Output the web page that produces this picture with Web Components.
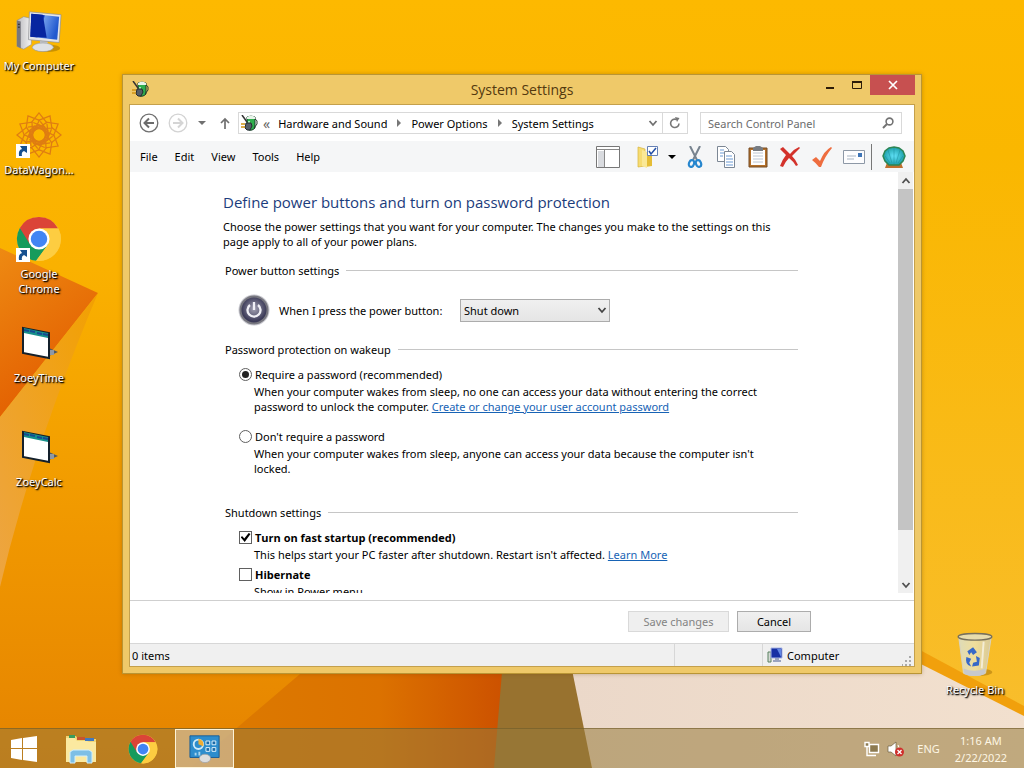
<!DOCTYPE html>
<html lang="en">
<head>
<meta charset="utf-8">
<meta name="viewport" content="width=device-width, initial-scale=1">
<title>System Settings</title>
<style>
    html, body {
        margin: 0;
        height: 100%;
    }
    body {
        font: 11px/15px "Noto Sans", "Open Sans", sans-serif;
        color: #000;
        --title-font: "Open Sans", "Noto Sans", sans-serif;
        --accent: #efc969;
        --line: #cfcfcf;
        --link: #1763b5;
    }
</style>
</head>
<body>
<desk-top>
    <desktop-icon slot="icons" icon="computer" label="My Computer"></desktop-icon>
    <desktop-icon slot="icons" icon="wagon" label="DataWagon..." shortcut></desktop-icon>
    <desktop-icon slot="icons" icon="chrome" label="Google Chrome" shortcut></desktop-icon>
    <desktop-icon slot="icons" icon="zoey" label="ZoeyTime"></desktop-icon>
    <desktop-icon slot="icons" icon="zoey" label="ZoeyCalc"></desktop-icon>
    <desktop-icon slot="corner" icon="bin" label="Recycle Bin"></desktop-icon>

    <app-window slot="window" caption="System Settings">
        <nav-bar></nav-bar>
        <menu-strip></menu-strip>
        <power-settings></power-settings>
        <status-bar></status-bar>
    </app-window>

    <task-bar slot="taskbar"></task-bar>
</desk-top>

<script>
const ICONS = {
    computer: ['0 0 48 46', `
        <defs>
            <linearGradient id="a" x1="0" x2="1" y2=".3"><stop offset="0" stop-color="#0a2a9c"/><stop offset=".45" stop-color="#0a33c0"/><stop offset=".5" stop-color="#6f9bea"/><stop offset="1" stop-color="#2259cf"/></linearGradient>
            <linearGradient id="b" x1="0" x2="1"><stop offset="0" stop-color="#b9b9bd"/><stop offset="1" stop-color="#f4f4f4"/></linearGradient>
        </defs>
        <ellipse cx="32" cy="41" rx="14" ry="4" fill="#6b4a00" opacity=".35"/>
        <path d="M1 12l7-4 8 2v27l-8 5-7-3z" fill="url(#b)" stroke="#8d8d92" stroke-width=".6"/>
        <path d="M1 12l4 1v28l-4-2z" fill="#77777d"/><path d="M2 16h2M2 19h2" stroke="#222"/>
        <path d="M25 33l8 1v5h-8z" fill="#c3c5c9"/>
        <ellipse cx="28" cy="40" rx="11" ry="4.500" fill="#dfe1e4" stroke="#97999d" stroke-width=".6"/>
        <path d="M14 3l33 3-2 29-32-3z" fill="#e4e5e8" stroke="#8b8d92" stroke-width=".7"/>
        <path d="M16 5l29 3-2 24-28-3z" fill="url(#a)"/>
        <path d="M16 5l12 1 4 24-17-1z" fill="#0725a0"/>`],
    wagon: ['-24 -24 48 48', `
        <g fill="none" stroke="#df7d12" stroke-width="1.300">
            ${[...Array(12).keys()].map(i => `<path transform="rotate(${i * 30})" d="M-8-13L0-23l8 10-13 8M-5-9L5-5M-6-13l12 5M-4-7q4-7 8 0"/>`).join('')}
            <circle r="7" stroke-dasharray="3 1.500"/>
        </g>`],
    chrome: ['0 0 48 48', `
        <circle cx="24" cy="24" r="23" fill="#fbc940"/>
        <path d="M24 24L4 12.500A23 23 0 0 0 21 46.800L34 29z" fill="#169b5c"/>
        <path d="M4 12.500A23 23 0 0 1 44 13H24L14.500 29.500z" fill="#db4437"/>
        <path d="M24 13h20a23 23 0 0 1-23 33.800L34 29z" fill="#fdcd41"/>
        <circle cx="24" cy="24" r="11" fill="#fff"/>
        <circle cx="24" cy="24" r="8.600" fill="#4285f4"/>`],
    zoey: ['0 0 38 34', `
        <path d="M29 22l9 4-9 4z" fill="#4d5865"/><path d="M29 24h5v5h-5z" fill="#8f98a3"/>
        <path d="M3 2l26 5v25L3 27z" fill="#fff" stroke="#14202b" stroke-width="2"/>
        <path d="M4 2l24 5v5L4 7z" fill="#17908a"/>
        <path d="M4 4l5 1M10 5l5 1M17 7l5 1M23 8l5 1" stroke="#154a92" stroke-width="2"/>`],
    bin: ['0 0 40 48', `
        <defs><linearGradient id="g" x1="0" x2="1"><stop offset="0" stop-color="#dedbb8"/><stop offset=".5" stop-color="#f0dd9a"/><stop offset="1" stop-color="#d8c997"/></linearGradient></defs>
        <ellipse cx="23" cy="42" rx="15" ry="4" fill="#8c5c00" opacity=".4"/>
        <path d="M3 5l5 38q12 5 23 0L37 5z" fill="url(#g)" stroke="#d7d3c3"/>
        <path d="M8 38l1 6q11 4 21 0l1-6q-12 5-23 0z" fill="#c7c9cc"/>
        <ellipse cx="20" cy="5" rx="17.500" ry="3.500" fill="#e7dcae" stroke="#77705c" stroke-width="1.500"/>
        <path d="M12 20l6-4 4 5-4 3-2-3-2 3zM21 25l4 2-1 8-7 1 1-4 4-1zM11 26l5 2-2 4 2 4q-7-2-5-10z" fill="#3768c7"/>
        <path d="M29 10l-2 28" stroke="#fff" opacity=".6" stroke-width="2"/>`],
    shortcut: ['0 0 14 14', `
        <path d="M0 0h14v14H0z" fill="#fff"/>
        <path d="M3 12q-1-6 3-7L4 2h7v7L8 7q-3 1-2 5z" fill="#17508f"/>`],
    plug: ['0 0 17 17', `
        <path d="M6 2l4-1 4 1v11q-4 4-8 1z" fill="#2fae4d" stroke="#173d28"/>
        <path d="M6 2q4-3 8 0v2H6z" fill="#e9f4ea"/><path d="M8 6v6" stroke="#a7efb5" stroke-width="2"/>
        <path d="M14 4q3 1 2 5l-3 4" fill="none" stroke="#243b2b"/>
        <path d="M1 0l5 7" stroke="#333" stroke-width="1.500"/>
        <path d="M5 8h5l1 3-2 4H6l-2-2z" fill="#555e68" stroke="#252a30"/>
        <path d="M0 9h4M0 12h4" stroke="#d29413" stroke-width="1.500"/>`],
    back: ['0 0 20 20', `<circle cx="10" cy="10" r="8.800" fill="#fff" stroke="#707070" stroke-width="1.300"/><path d="M15 10H6M10 5.500L5.500 10l4.500 4.500" fill="none" stroke="#6b6b6b" stroke-width="2"/>`],
    forward: ['0 0 20 20', `<circle cx="10" cy="10" r="8.800" fill="#fff" stroke="#d3d3d3" stroke-width="1.300"/><path d="M5 10h9M10 5.500l4.500 4.500-4.500 4.500" fill="none" stroke="#d5d5d5" stroke-width="2"/>`],
    caret: ['0 0 8 8', `<path d="M0 2h8L4 6z" fill="currentColor"/>`],
    up: ['0 0 10 12', `<path d="M5 12V2M1 6l4-4 4 4" fill="none" stroke="#707070" stroke-width="1.700"/>`],
    crumb: ['0 0 6 8', `<path d="M1 0l4 4-4 4z" fill="#777"/>`],
    chevron: ['0 0 10 10', `<path d="M1.500 3L5 7l3.500-4" fill="none" stroke="currentColor" stroke-width="1.800"/>`],
    refresh: ['0 0 12 12', `<path d="M10 6.500A4.200 4.200 0 1 1 7.500 2.500" fill="none" stroke="#777" stroke-width="1.600"/><path d="M6 0l4.500 1L8 5z" fill="#777"/>`],
    search: ['0 0 12 12', `<circle cx="7.500" cy="4.500" r="3.400" fill="none" stroke="#737373" stroke-width="1.600"/><path d="M5 7l-4 4" stroke="#737373" stroke-width="2"/>`],
    pane: ['0 0 24 22', `<path d="M.5.5h23v21H.5z" fill="#fff" stroke="#777"/><path d="M1 3.500h22M8.500 4v17" stroke="#888"/><path d="M2 5h6v16H2z" fill="#d9dbdf"/>`],
    folder: ['0 0 22 22', `<path d="M2 1l7 2v17l-7 1z" fill="#f6dc73" stroke="#d9b53b" stroke-width=".7"/><path d="M9 7h7v13l-7 1z" fill="#e5bd36"/><path d="M6 4l5 2v16l-5-2z" fill="#fae896"/><path d="M11.500.5h10v9h-10z" fill="#fff" stroke="#6681b5"/><path d="M13 5l2 3 5-6" fill="none" stroke="#234fa6" stroke-width="1.500"/>`],
    cut: ['0 0 16 22', `<path d="M3 0l7 14M13 0L6 14" stroke="#77838f" stroke-width="2"/><g fill="none" stroke="#2686ce" stroke-width="2.200"><ellipse cx="4.500" cy="17.500" rx="2.500" ry="3.500" transform="rotate(20 4.500 17.500)"/><ellipse cx="11.500" cy="17.500" rx="2.500" ry="3.500" transform="rotate(-20 11.500 17.500)"/></g>`],
    copy: ['0 0 20 22', `<g fill="#fff" stroke="#7c8794"><path d="M1.500.5h8l3 3v12h-11z"/><path d="M8.500 5.500h7l3 3v13h-10z"/></g><path d="M4 4h4M4 7h4M4 10h3M10 10h6M10 13h7M10 16h7M10 19h7" stroke="#6a9ad4"/>`],
    paste: ['0 0 20 22', `<path d="M1 2h18v19H1z" fill="#b3702a" stroke="#754a22"/><path d="M3 4h14v15H3z" fill="#fff"/><path d="M5 2l3-2h4l3 2v3H5z" fill="#777c82"/><path d="M5 7h10M5 10h10M5 13h10M5 16h10" stroke="#bcc6d3"/>`],
    remove: ['0 0 22 22', `<path d="M1 3l3-2 7 7q4-5 9-7l1 1-8 8q4 4 6 9l-2 1q-3-5-7-8-4 4-6 9l-3-1q2-6 6-11z" fill="#d3322b"/>`],
    tick: ['0 0 20 22', `<path d="M0 14l4-3 4 4Q12 5 19 1l1 1Q13 10 9 21H7q-3-4-7-7z" fill="#ee6d3f"/>`],
    mail: ['0 0 22 14', `<path d="M.5.5h21v13H.5z" fill="#fdfdfe" stroke="#8d98a6"/><path d="M4 6h9M4 9h7" stroke="#a9b5c3"/><path d="M15 3h4v4h-4z" fill="#3e75b7"/>`],
    shell: ['0 0 24 22', `
        <defs><radialGradient id="s"><stop offset="0" stop-color="#62e3fa"/><stop offset="1" stop-color="#1d9fa8"/></radialGradient></defs>
        <path d="M6 14h12l3 8H3z" fill="#c06f2c"/>
        <path d="M12 1l5 1 4 3 2 5-2 5-4 4H7l-4-4-2-5 2-5 4-3z" fill="url(#s)" stroke="#2d8554" stroke-width="1.500"/>
        <path d="M12 18V2M10 17L6 4M14 17l4-13M8 17l-5-7M16 17l5-7" stroke="#1a8b9b" stroke-width=".5" fill="none"/>`],
    power: ['0 0 32 32', `
        <defs><radialGradient id="p" cx=".5" cy=".45"><stop offset="0" stop-color="#a3a2b3"/><stop offset="1" stop-color="#3b3a57"/></radialGradient></defs>
        <circle cx="16" cy="16" r="15.500" fill="#c8c8cf"/><circle cx="16" cy="16" r="14.500" fill="#77777f"/><circle cx="16" cy="16" r="12.500" fill="url(#p)"/>
        <path d="M12 11a6.500 6.500 0 1 0 8 0M16 8v8" fill="none" stroke="#f1f1f6" stroke-width="2.300"/>`],
    pc: ['0 0 16 16', `<path d="M1 5h3v10H1z" fill="#d5dad5" stroke="#5b8161"/><path d="M4 1h11v10H4z" fill="#1730a4" stroke="#a9b6e6"/><path d="M10 2h4v8z" fill="#6287e4"/><path d="M8 11h4v2h2v2H6v-2h2z" fill="#9aa4bf"/>`],
    grip: ['0 0 10 10', `<path d="M7 0h2v2H7zM7 4h2v2H7zM7 8h2v2H7zM3 4h2v2H3zM3 8h2v2H3zM-1 8h2v2h-2z" fill="#aaa"/>`],
    minimize: ['0 0 12 12', `<path d="M2 8h8v2H2z" fill="#2c1c08"/>`],
    maximize: ['0 0 12 12', `<path d="M1.500 2.500h9v7h-9z" fill="none" stroke="#2c1c08"/><path d="M1 2h10v2H1z" fill="#2c1c08"/>`],
    close: ['0 0 12 12', `<path d="M2 2l8 8M10 2l-8 8" stroke="#fff" stroke-width="1.700"/>`],
    start: ['0 0 28 28', `<path d="M1 5l11-2v10H1zM13 3l14-2v12H13zM1 14h11v11L1 23zM13 14h14v13l-14-2z" fill="#fff"/>`],
    explorer: ['0 0 32 30', `
        <path d="M1 2h10l2 3h18v23H1z" fill="#f1d575"/><path d="M4 1h6v3H4z" fill="#3a9b5c"/><path d="M12 3h8v3h-8z" fill="#c9542b"/><path d="M20 4h9v3h-9z" fill="#4278bd"/>
        <path d="M1 4h9l2 3h10l2 1h7v20H1z" fill="#fbe9a0"/>
        <path d="M5 29V18l3-2h16l3 2v11h-5v-7H10v7z" fill="#7dbfe6" stroke="#d2effb"/>`],
    panel: ['0 0 34 30', `
        <path d="M1 1h31v23H1z" fill="#2d8dcd" stroke="#175c95"/>
        <circle cx="10" cy="10" r="5" fill="none" stroke="#cfeaf9" stroke-width="2"/><path d="M10 10V4a6 6 0 0 1 5 8z" fill="#f0ad34"/>
        <path d="M18 6.500h4v4h-4zM24.500 6.500h4v4h-4zM18 13.500h4v4h-4zM24.500 13.500h4v4h-4z" fill="#1c6aa7" stroke="#e1f4ff"/>
        <path d="M7 19v3M11 18v4" stroke="#a8d6ef" stroke-width="2"/>
        <ellipse cx="17" cy="25" rx="6" ry="4.500" fill="#dcdddd" stroke="#999" stroke-width=".7"/>`],
    network: ['0 0 16 16', `<path d="M5.500 3.500h9v8h-9z" fill="#8d7a50" stroke="#fff" stroke-width="1.400"/><path d="M1 1.500h4v4H1z" fill="#8d7a50" stroke="#fff" stroke-width="1.400"/><path d="M3 6v8.500h9" fill="none" stroke="#fff" stroke-width="1.400"/>`],
    volume: ['0 0 18 16', `<path d="M1 5h3l5-4v14l-5-4H1z" fill="#fff" stroke="#6e5e3f" stroke-width=".7"/><path d="M11 4q3 4 0 8" fill="none" stroke="#fff"/><circle cx="12.500" cy="11" r="4.500" fill="#cf2f2b"/><path d="M10.500 9l4 4M14.500 9l-4 4" stroke="#fff" stroke-width="1.300"/>`]
};

function define(name, html, setup) {
    customElements.define(name, class extends HTMLElement {
        constructor() {
            super();
            this.attachShadow({mode: 'open'});
        }
        connectedCallback() {
            this.shadowRoot.innerHTML = html;
            if (setup) setup(this, this.shadowRoot);
        }
    });
}

define('shell-icon', '', (el, root) => {
    const [box, shapes] = ICONS[el.getAttribute('name')];
    root.innerHTML = `
        <style>
            :host { display: block; flex: none; width: 16px; height: 16px; }
            svg { display: block; width: 100%; height: 100%; }
        </style>
        <svg viewBox="${box}" aria-hidden="true">${shapes}</svg>`;
});

define('desk-top', `
    <style>
        :host {
            position: relative;
            display: grid;
            grid-template-rows: 1fr auto;
            min-height: 100vh;
            overflow: hidden;
        }
        .wallpaper { position: absolute; width: 100%; height: 100%; }
        main {
            position: relative;
            display: flex;
            justify-content: space-between;
        }
        .corner { align-self: flex-end; padding-right: 10px; }
        ::slotted([slot=window]) { position: absolute; inset: 74px 102px 54px 122px; }
    </style>
    <svg class="wallpaper" viewBox="0 0 1024 768" preserveAspectRatio="none" aria-hidden="true">
        <defs>
            <linearGradient id="sky" x1="0" x2="0" y2="1"><stop offset="0" stop-color="#fdb900"/><stop offset=".35" stop-color="#fab100"/><stop offset=".7" stop-color="#f09700"/><stop offset="1" stop-color="#e58300"/></linearGradient>
            <linearGradient id="east" x1="0" x2="0" y2="1"><stop offset="0" stop-color="#fdb900"/><stop offset=".2" stop-color="#fab700"/><stop offset="1" stop-color="#f8be30"/></linearGradient>
            <linearGradient id="red" x1="0" x2=".4" y2="1"><stop offset="0" stop-color="#ee8a12"/><stop offset="1" stop-color="#e25c00"/></linearGradient>
            <linearGradient id="ray" x1="1" x2="0" y2="1"><stop offset="0" stop-color="#f2a000"/><stop offset="1" stop-color="#eda542"/></linearGradient>
            <linearGradient id="fold" x1="0" x2="1"><stop offset="0" stop-color="#dc7b00"/><stop offset=".6" stop-color="#dc7200"/><stop offset="1" stop-color="#cc5100"/></linearGradient>
            <linearGradient id="sand" x1="0" x2="1"><stop offset="0" stop-color="#ebd8c9"/><stop offset="1" stop-color="#f2e0ce"/></linearGradient>
        </defs>
        <path d="M0 0h1024v768H0z" fill="url(#sky)"/>
        <path d="M600 0h424v768H600z" fill="url(#east)"/>
        <path d="M0 248l98 45L0 417z" fill="url(#red)"/>
        <path d="M98 293L0 417v170Q32 450 98 293z" fill="url(#ray)"/>
        <path d="M300 674h205l-10 94H190z" fill="url(#fold)"/>
        <path d="M503 660h69l20 108h-98z" fill="#98722f"/>
        <path d="M570 660h352l102 52v56H592z" fill="url(#sand)"/>
        <path d="M905 642l119 64v10L905 656z" fill="#f1a00c"/>
    </svg>
    <main>
        <div><slot name="icons"></slot></div>
        <div class="corner"><slot name="corner"></slot></div>
        <slot name="window"></slot>
    </main>
    <slot name="taskbar"></slot>`);

define('desktop-icon', `
    <style>
        :host { display: block; width: 78px; height: 104px; }
        a {
            display: flex;
            flex-direction: column;
            align-items: center;
            gap: 4px;
            padding-top: 8px;
            color: #fff;
            text-align: center;
            text-decoration: none;
            text-shadow: 1px 1px 1px #000, 1px 1px 2px #000;
        }
        .art { display: grid; place-items: center; width: 46px; height: 46px; }
        .art > * { grid-area: 1 / 1; }
        .picture { width: 46px; height: 46px; }
        .picture[name=zoey] { width: 38px; height: 34px; }
        .badge { width: 14px; height: 14px; place-self: end start; }
        span { padding: 0 8px; }
        span.wide { padding: 0; white-space: nowrap; }
    </style>
    <a href="#">
        <div class="art"></div>
        <span></span>
    </a>`, (el, root) => {
        const label = el.getAttribute('label');
        const span = root.querySelector('span');
        span.textContent = label;
        span.classList.toggle('wide', label !== 'Google Chrome');
        root.querySelector('.art').innerHTML =
            `<shell-icon class="picture" name="${el.getAttribute('icon')}"></shell-icon>` +
            (el.hasAttribute('shortcut') ? '<shell-icon class="badge" name="shortcut"></shell-icon>' : '');
    });

define('app-window', `
    <style>
        :host {
            box-sizing: border-box;
            display: flex;
            flex-direction: column;
            padding: 0 6px 6px;
            border: 1px solid #b99535;
            background: var(--accent);
            box-shadow: 0 0 4px rgba(110, 70, 0, .35);
        }
        header {
            display: grid;
            grid-template-columns: 1fr auto 1fr;
            flex: none;
            height: 29px;
        }
        .app { align-self: center; width: 17px; height: 17px; margin-left: 3px; }
        h1 { align-self: center; margin: 0; font: 400 14px/20px var(--title-font); color: #53390f; }
        .controls { display: flex; justify-content: flex-end; }
        .controls button {
            display: grid;
            place-items: center;
            width: 27px;
            height: 20px;
            padding: 0;
            border: 0;
            background: none;
        }
        .controls .close { width: 45px; background: #c75050; }
        .controls shell-icon { width: 12px; height: 12px; }
        .body {
            display: flex;
            flex-direction: column;
            flex: 1;
            min-height: 0;
            border: 1px solid #c4a04c;
            background: #fff;
        }
    </style>
    <header>
        <shell-icon class="app" name="plug"></shell-icon>
        <h1></h1>
        <div class="controls">
            <button aria-label="Minimize"><shell-icon name="minimize"></shell-icon></button>
            <button aria-label="Maximize"><shell-icon name="maximize"></shell-icon></button>
            <button class="close" aria-label="Close"><shell-icon name="close"></shell-icon></button>
        </div>
    </header>
    <div class="body"><slot></slot></div>`, (el, root) => {
        root.querySelector('h1').textContent = el.getAttribute('caption');
    });

define('nav-bar', `
    <style>
        :host { display: flex; align-items: center; flex: none; height: 36px; padding: 0 12px 0 9px; }
        button { display: grid; place-items: center; padding: 0; border: 0; background: none; color: #707070; }
        .round, .round shell-icon { width: 20px; height: 20px; }
        .round + .round { margin-left: 9px; }
        .recent { margin: 0 14px 0 10px; }
        .recent shell-icon { width: 8px; height: 8px; }
        .up shell-icon { width: 10px; height: 12px; }
        .address, .search {
            box-sizing: border-box;
            display: flex;
            align-items: center;
            height: 22px;
            border: 1px solid #d9d9d9;
        }
        .address { flex: 1; margin: 0 12px 0 8px; padding-left: 2px; }
        .address > shell-icon { width: 8px; height: 8px; }
        .address .app { width: 17px; height: 17px; }
        .address a { margin: 0 8px; color: #000; text-decoration: none; white-space: nowrap; }
        .more { margin-left: 5px; color: #666; font-size: 14px; }
        .drop { margin-left: auto; width: 18px; }
        .drop shell-icon { width: 10px; height: 10px; }
        .refresh { width: 25px; height: 20px; border-left: 1px solid #d9d9d9; }
        .refresh shell-icon { width: 12px; height: 12px; }
        .search { width: 202px; padding: 0 7px; }
        .search shell-icon { width: 12px; height: 12px; }
        input { flex: 1; min-width: 0; padding: 0; border: 0; outline: 0; font: inherit; background: none; }
        input::placeholder { color: #6d6d6d; opacity: 1; }
    </style>
    <button class="round" aria-label="Back"><shell-icon name="back"></shell-icon></button>
    <button class="round" aria-label="Forward"><shell-icon name="forward"></shell-icon></button>
    <button class="recent" aria-label="Recent locations"><shell-icon name="caret"></shell-icon></button>
    <button class="up" aria-label="Up"><shell-icon name="up"></shell-icon></button>
    <nav class="address">
        <shell-icon class="app" name="plug"></shell-icon>
        <span class="more">«</span>
        <a href="#">Hardware and Sound</a>
        <shell-icon name="crumb"></shell-icon>
        <a href="#">Power Options</a>
        <shell-icon name="crumb"></shell-icon>
        <a href="#">System Settings</a>
        <button class="drop" aria-label="Previous locations"><shell-icon name="chevron"></shell-icon></button>
        <button class="refresh" aria-label="Refresh"><shell-icon name="refresh"></shell-icon></button>
    </nav>
    <div class="search">
        <input type="text" aria-label="Search Control Panel" placeholder="Search Control Panel">
        <shell-icon name="search"></shell-icon>
    </div>`);

define('menu-strip', `
    <style>
        :host {
            display: flex;
            justify-content: space-between;
            align-items: center;
            flex: none;
            height: 31px;
            padding: 0 8px 0 10px;
            background: #f5f6f7;
        }
        div { display: flex; align-items: center; }
        .menus { gap: 17px; }
        .tools { gap: 10px; }
        button { padding: 0; border: 0; background: none; font: inherit; color: inherit; }
        shell-icon { width: 22px; height: 22px; }
        [name=pane] { width: 24px; margin-right: 6px; }
        .arrow { margin-right: 1px; }
        .arrow shell-icon { width: 8px; height: 8px; }
        [name=cut] { width: 16px; margin-right: 2px; }
        [name=shell] { width: 24px; }
        .rule { width: 1px; height: 26px; background: #777; margin-left: -4px; }
    </style>
    <div class="menus">
        <button>File</button><button>Edit</button><button>View</button><button>Tools</button><button>Help</button>
    </div>
    <div class="tools">
        <button aria-label="Navigation pane"><shell-icon name="pane"></shell-icon></button>
        <button aria-label="Folder options"><shell-icon name="folder"></shell-icon></button>
        <button class="arrow" aria-label="More options"><shell-icon name="caret"></shell-icon></button>
        <button aria-label="Cut"><shell-icon name="cut"></shell-icon></button>
        <button aria-label="Copy"><shell-icon name="copy"></shell-icon></button>
        <button aria-label="Paste"><shell-icon name="paste"></shell-icon></button>
        <button aria-label="Delete"><shell-icon name="remove"></shell-icon></button>
        <button aria-label="Properties"><shell-icon name="tick"></shell-icon></button>
        <button aria-label="Mail"><shell-icon name="mail"></shell-icon></button>
        <span class="rule"></span>
        <button aria-label="Classic Shell"><shell-icon name="shell"></shell-icon></button>
    </div>`);

define('group-title', `
    <style>
        :host { display: flex; align-items: center; gap: 7px; height: 15px; margin-left: 2px; }
        h3 { margin: 0; font: inherit; }
        i { flex: 1; height: 1px; background: #c6c6c6; }
    </style>
    <h3><slot></slot></h3><i></i>`);

define('option-row', `
    <style>
        :host { display: block; margin-left: 16px; }
        label { display: flex; align-items: center; gap: 3px; height: 15px; margin-bottom: 2px; }
        label.strong { font-family: var(--title-font); font-weight: 700; }
        input {
            appearance: none;
            display: grid;
            place-items: center;
            flex: none;
            box-sizing: border-box;
            width: 13px;
            height: 13px;
            margin: 0;
            border: 1px solid #606060;
            background: #fff;
        }
        input[type=radio] { border-radius: 50%; }
        input[type=radio]:checked::before { content: ""; width: 7px; height: 7px; border-radius: 50%; background: #222; }
        input[type=checkbox]:checked::before {
            content: "";
            width: 10px;
            height: 9px;
            background: #000;
            clip-path: polygon(0 45%, 18% 35%, 38% 60%, 82% 0, 100% 12%, 42% 100%);
        }
        p { margin: 0 20px 0 15px; }
    </style>
    <label><input><span></span></label>
    <p><slot></slot></p>`, (el, root) => {
        const input = root.querySelector('input');
        input.type = el.getAttribute('type');
        input.checked = el.hasAttribute('checked');
        root.querySelector('span').textContent = el.getAttribute('label');
        root.querySelector('label').classList.toggle('strong', input.type === 'checkbox');
    });

define('scroll-bar', `
    <style>
        :host { display: flex; flex-direction: column; width: 15px; margin-right: 1px; background: #f0f0f0; color: #505050; }
        button { display: grid; place-items: center; height: 17px; padding: 0; border: 0; background: none; color: inherit; }
        shell-icon { width: 10px; height: 10px; }
        .flip { transform: rotate(180deg); }
        .track { display: flex; flex: 1; }
        .thumb { flex: 1; height: 88%; background: #c4c4c4; }
    </style>
    <button aria-label="Scroll up"><shell-icon class="flip" name="chevron"></shell-icon></button>
    <div class="track"><div class="thumb"></div></div>
    <button aria-label="Scroll down"><shell-icon name="chevron"></shell-icon></button>`);

define('power-settings', `
    <style>
        :host { display: flex; flex-direction: column; flex: 1; min-height: 0; }
        .view { display: flex; flex: 1; min-height: 0; margin-bottom: 7px; }
        .page { flex: 1; min-width: 0; overflow: hidden; padding: 18px 100px 0 93px; }
        h2 { margin: 0; font: 400 15px/24px var(--title-font); color: #1b3c7c; }
        p { margin: 5px 0 14px; }
        a { color: var(--link); }
        .action { display: flex; align-items: center; height: 32px; margin: 16px 0 16px 15px; }
        .action > shell-icon { width: 32px; height: 32px; margin-right: 9px; }
        .action label { width: 181px; }
        .pick { display: grid; align-items: center; width: 150px; }
        .pick > * { grid-area: 1 / 1; }
        .pick shell-icon { width: 10px; height: 10px; margin-right: 3px; justify-self: end; pointer-events: none; color: #444; }
        select {
            appearance: none;
            height: 23px;
            padding: 0 16px 0 3px;
            border: 1px solid #acacac;
            border-radius: 0;
            background: linear-gradient(#f0f0f0, #e5e5e5);
            font: inherit;
        }
        .first { margin-top: 10px; margin-bottom: 15px; }
        .gap { margin-bottom: 29px; }
        .fast { margin-top: 10px; margin-bottom: 5px; }
        footer {
            display: flex;
            justify-content: flex-end;
            align-items: center;
            gap: 8px;
            height: 40px;
            padding: 0 103px 2px 0;
            border-top: 1px solid var(--line);
        }
        footer button {
            width: 74px;
            height: 21px;
            padding: 0;
            border: 1px solid #acacac;
            background: linear-gradient(#f0f0f0, #e5e5e5);
            font: inherit;
        }
        footer button:disabled { width: 101px; border-color: #d9d9d9; background: #efefef; color: #838383; }
    </style>
    <div class="view">
        <div class="page">
            <h2>Define power buttons and turn on password protection</h2>
            <p>Choose the power settings that you want for your computer. The changes you make to the settings on this page apply to all of your power plans.</p>
            <group-title>Power button settings</group-title>
            <div class="action">
                <shell-icon name="power"></shell-icon>
                <label for="press">When I press the power button:</label>
                <div class="pick">
                    <select id="press"><option>Shut down</option><option>Sleep</option><option>Do nothing</option></select>
                    <shell-icon name="chevron"></shell-icon>
                </div>
            </div>
            <group-title>Password protection on wakeup</group-title>
            <option-row class="first" type="radio" checked label="Require a password (recommended)">When your computer wakes from sleep, no one can access your data without entering the correct password to unlock the computer. <a href="#">Create or change your user account password</a></option-row>
            <option-row class="gap" type="radio" label="Don't require a password">When your computer wakes from sleep, anyone can access your data because the computer isn't locked.</option-row>
            <group-title>Shutdown settings</group-title>
            <option-row class="fast" type="checkbox" checked label="Turn on fast startup (recommended)">This helps start your PC faster after shutdown. Restart isn't affected. <a href="#">Learn More</a></option-row>
            <option-row type="checkbox" label="Hibernate">Show in Power menu</option-row>
        </div>
        <scroll-bar></scroll-bar>
    </div>
    <footer>
        <button disabled>Save changes</button>
        <button>Cancel</button>
    </footer>`);

define('status-bar', `
    <style>
        :host { display: flex; flex: none; height: 22px; border-top: 1px solid #d7d7d7; background: #f0f0f0; }
        span { display: flex; align-items: center; padding: 0 2px; }
        .items { flex: 1; }
        .blank { width: 83px; border-left: 1px solid #d7d7d7; }
        .place { width: 145px; gap: 4px; padding-left: 4px; border-left: 1px solid #d7d7d7; }
        .grip { width: 10px; height: 10px; margin-left: auto; align-self: flex-end; }
    </style>
    <span class="items">0 items</span>
    <span class="blank"></span>
    <span class="place"><shell-icon name="pc"></shell-icon>Computer<shell-icon class="grip" name="grip"></shell-icon></span>`);

define('task-bar', `
    <style>
        :host {
            position: relative;
            box-sizing: border-box;
            display: flex;
            align-items: center;
            height: 40px;
            border-top: 1px solid rgba(110, 90, 40, .6);
            background: rgba(150, 122, 60, .54);
            color: #fdf6e4;
        }
        button { display: grid; place-items: center; box-sizing: border-box; height: 39px; padding: 0; border: 0; background: none; }
        .start { width: 48px; margin-right: 2px; }
        .start shell-icon { width: 28px; height: 28px; }
        .app { width: 62px; }
        .app shell-icon { width: 32px; height: 30px; }
        .active { width: 59px; margin-left: 1px; border: 1px solid #fdf3d7; background: rgba(222, 200, 170, .6); }
        .tray { display: flex; align-items: center; gap: 7px; margin-left: auto; padding-right: 17px; }
        .tray [name=volume] { width: 18px; }
        .lang { margin: 0 8px 0 5px; }
        time { text-align: center; line-height: 17px; }
    </style>
    <button class="start" aria-label="Start"><shell-icon name="start"></shell-icon></button>
    <button class="app" aria-label="File Explorer"><shell-icon name="explorer"></shell-icon></button>
    <button class="app" aria-label="Google Chrome"><shell-icon name="chrome"></shell-icon></button>
    <button class="active app" aria-label="System Settings"><shell-icon name="panel"></shell-icon></button>
    <div class="tray">
        <shell-icon name="network"></shell-icon>
        <shell-icon name="volume"></shell-icon>
        <span class="lang">ENG</span>
        <time datetime="2022-02-22T01:16">1:16 AM<br>2/22/2022</time>
    </div>`);
</script>
</body>
</html>
